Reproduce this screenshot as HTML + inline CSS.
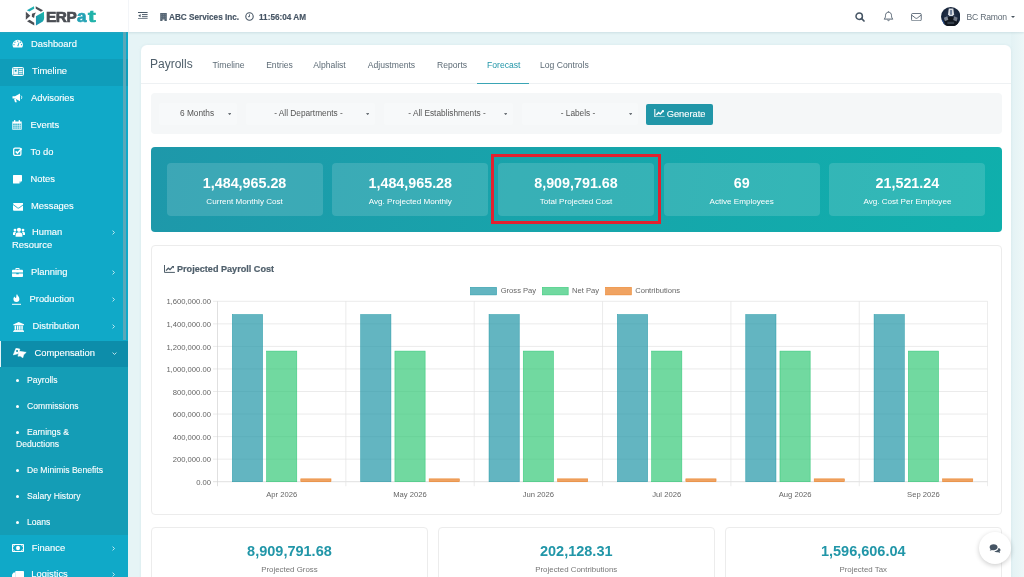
<!DOCTYPE html>
<html><head><meta charset="utf-8">
<style>
*{box-sizing:border-box;margin:0;padding:0}
html,body{width:1024px;height:577px;overflow:hidden}
body{font-family:"Liberation Sans",sans-serif;background:#e6f4f6;position:relative;color:#4e5e6a}
.abs{position:absolute}
#top,#side,#wrap{will-change:transform}
#top{position:absolute;left:0;top:0;width:1024px;height:32px;background:#fff;box-shadow:0 1px 2px rgba(120,160,170,.22);z-index:5}
#side{position:absolute;left:0;top:32px;width:128px;height:545px;background:#10a9c8;z-index:4;overflow:hidden}
.mi{position:absolute;left:0;width:128px;height:27px;color:#fff;-webkit-text-stroke:.12px #fff;font-size:9.400px;line-height:12px;white-space:nowrap}
.mi span.t{position:absolute;top:7.700px;}
.mi>svg{margin-top:1.100px}
.si{position:absolute;left:0;width:128px;color:#fff;-webkit-text-stroke:.1px #fff;font-size:8.600px;line-height:12px;white-space:nowrap}
.chev{position:absolute;left:111px;top:7px;font-size:8px;color:#e8f6fa}
#card{position:absolute;left:141px;top:45px;width:870px;height:560px;background:#fff;border-radius:6px 6px 0 0;box-shadow:0 0 3px rgba(150,190,200,.18)}
.tab{position:absolute;top:58.700px;font-size:8.6px;color:#5d6b76;white-space:nowrap;line-height:12px}
#filter{position:absolute;left:151px;top:93px;width:851px;height:41px;background:#f5f7f8;border-radius:4px}
.sel{position:absolute;top:107px;font-size:8.3px;color:#555;line-height:12px;white-space:nowrap}
.car{position:absolute;top:110px;font-size:6px;color:#777}
#banner{position:absolute;left:151px;top:147px;width:851px;height:85px;border-radius:4px;background:linear-gradient(100deg,#1e98aa 0%,#17a5ab 50%,#0fafac 100%)}
.tile{position:absolute;top:16px;width:156.200px;height:53px;border-radius:4px;background:rgba(255,255,255,.14);color:#fff;text-align:center}
.tile b{display:block;margin-top:12.400px;font-size:14.300px;line-height:16px}
.tile i{display:block;font-style:normal;font-size:8.100px;line-height:10px;margin-top:5.700px}
#chart{position:absolute;left:151px;top:245px;width:851px;height:269.600px;border:1px solid #ececec;border-radius:4px;background:#fff}
.bc{position:absolute;top:527.300px;width:276.900px;height:60px;border:1px solid #ececec;border-radius:4px;background:#fff;text-align:center}
.bc b{display:block;margin-top:15.200px;font-size:14.500px;line-height:16px;color:#2196a8}
.bc i{display:block;font-style:normal;font-size:7.900px;line-height:10px;margin-top:6px;color:#777}
</style></head><body>
<div id="top">
<!-- logo -->
<svg class="abs" style="left:20px;top:2px" width="40" height="28" viewBox="0 0 824 577">
<defs><linearGradient id="lg" x1="1" y1="0" x2="0" y2="1"><stop offset="0" stop-color="#1bb9a9"/><stop offset="1" stop-color="#1c8cb0"/></linearGradient>
<linearGradient id="lg2" x1="0" y1="1" x2="1" y2="0"><stop offset="0" stop-color="#23a3b8"/><stop offset="1" stop-color="#1fb6ae"/></linearGradient></defs>
<polygon points="140,172 288,88 292,138 192,198" fill="url(#lg2)"/>
<polygon points="322,88 474,170 432,202 326,138" fill="#4b4e54"/>
<polygon points="120,200 212,282 120,368" fill="#4b4e54"/>
<polygon points="122,277 136,284 122,291" fill="#fff"/>
<path d="M246 242 L328 218 L302 262 L290 330 L244 302z" fill="#4b4e54"/>
<polygon points="144,398 196,368 294,426 294,484" fill="#4b4e54"/>
<path d="M328 296 L494 200 L497 330 Q492 385 470 402 L328 484z" fill="url(#lg)"/>
</svg>
<div class="abs" style="left:46px;top:5.800px;font-size:15.400px;font-weight:bold;line-height:22px;letter-spacing:-.45px;-webkit-text-stroke:.7px currentColor;color:#4b4e54;white-space:nowrap">ERP<span style="font-size:17px;letter-spacing:1.700px;color:#24a2b4;margin-left:.6px">a</span><span style="font-size:17px;color:#1fb2a9;display:inline-block;transform:scaleX(1.35);transform-origin:0 50%">t</span></div>
<div class="abs" style="left:128px;top:0;width:1px;height:32px;background:#f3f5f8"></div>
<!-- hamburger -->
<svg class="abs" style="left:138px;top:12px" width="10" height="7.400" viewBox="0 0 10 7.400"><g fill="#4a5968"><rect x="0" y="0" width="9.600" height="1"/><rect x="4" y="2.100" width="5.600" height="1"/><rect x="4" y="4.200" width="5.600" height="1"/><rect x="0" y="6.300" width="9.600" height="1"/><polygon points="2.600,2 0.200,3.650 2.600,5.300"/></g></svg>
<!-- building -->
<svg class="abs" style="left:160px;top:12.800px" width="7" height="8.200" viewBox="0 0 7 8.200"><path d="M0.200 0h6.600v8.200h-2.300v-1.700h-2v1.700h-2.300z" fill="#566674"/><g fill="#fff" opacity=".18"><rect x="1.300" y="1.100" width="1" height="1"/><rect x="3" y="1.100" width="1" height="1"/><rect x="4.700" y="1.100" width="1" height="1"/><rect x="1.300" y="2.900" width="1" height="1"/><rect x="3" y="2.900" width="1" height="1"/><rect x="4.700" y="2.900" width="1" height="1"/><rect x="1.300" y="4.700" width="1" height="1"/><rect x="3" y="4.700" width="1" height="1"/><rect x="4.700" y="4.700" width="1" height="1"/></g></svg>
<div class="abs" style="left:169px;top:11.800px;font-size:8.200px;font-weight:bold;line-height:12px;color:#465564;white-space:nowrap;-webkit-text-stroke:.15px #465564">ABC Services Inc.</div>
<svg class="abs" style="left:244.500px;top:12.300px" width="9" height="9" viewBox="0 0 9 9"><circle cx="4.500" cy="4.500" r="3.700" fill="none" stroke="#465564" stroke-width="1.100"/><path d="M4.500 2.400v2.300h-1.500" fill="none" stroke="#465564" stroke-width=".9"/></svg>
<div class="abs" style="left:259px;top:11.800px;font-size:8.200px;font-weight:bold;line-height:12px;color:#465564;white-space:nowrap;-webkit-text-stroke:.15px #465564">11:56:04 AM</div>
<!-- search -->
<svg class="abs" style="left:854.800px;top:11.900px" width="10" height="10" viewBox="0 0 10 10"><circle cx="4.200" cy="4.200" r="3.200" fill="none" stroke="#465564" stroke-width="1.500"/><path d="M6.700 6.700l2.300 2.300" stroke="#465564" stroke-width="1.700" stroke-linecap="round"/></svg>
<!-- bell -->
<svg class="abs" style="left:882.5px;top:11px" width="11" height="11" viewBox="0 0 11 11"><path d="M5.5 1.2c-2 0-3 1.5-3 3.4 0 1.7-.5 2.7-1.4 3.5h8.8c-.9-.8-1.4-1.8-1.4-3.5 0-1.9-1-3.4-3-3.4z" fill="none" stroke="#465564" stroke-width=".9"/><path d="M4.6 8.8a.9.9 0 0 0 1.8 0" fill="none" stroke="#465564" stroke-width=".8"/><rect x="5.1" y=".3" width=".8" height="1" fill="#465564"/></svg>
<!-- envelope -->
<svg class="abs" style="left:911.200px;top:12.800px" width="10.800" height="8.300" viewBox="0 0 11.5 9"><rect x=".5" y=".5" width="10.5" height="8" rx="1.2" fill="none" stroke="#465564" stroke-width=".9"/><path d="M.8 2.4l4 3.1c.6.45 1.3.45 1.9 0l4-3.1" fill="none" stroke="#465564" stroke-width=".9"/></svg>
<!-- avatar -->
<svg class="abs" style="left:940.500px;top:6.500px" width="19.500" height="19.500" viewBox="0 0 20 20"><defs><clipPath id="av"><circle cx="10" cy="10" r="10"/></clipPath><radialGradient id="avg" cx=".5" cy=".45" r=".75"><stop offset="0" stop-color="#2c3a52"/><stop offset=".6" stop-color="#16243a"/><stop offset="1" stop-color="#1d3a5c"/></radialGradient></defs><g clip-path="url(#av)"><rect width="20" height="20" fill="url(#avg)"/><path d="M8 1.500h4.600l.8 6-1.400 1.800h-3.400l-1.400-1.800z" fill="#d9dde3"/><path d="M9.300 3h2v5h-2z" fill="#6e7f9a"/><path d="M2 20c0-6 2.500-10 8.200-10s8 4 8 10z" fill="#10161f"/><path d="M3 11l3.500-1.500 1 3.500-3.500 1.500z" fill="#8e97a5" opacity=".85"/><path d="M13.500 9.500l3.500 1.500-1 3.800-3.500-1.500z" fill="#818a99" opacity=".85"/><path d="M1 13c2 1 3 3 3 6h-3z" fill="#2a5aa8" opacity=".7"/><path d="M6.500 15h7v2.500h-7z" fill="#39424f" opacity=".9"/></g></svg>
<div class="abs" style="left:966.500px;top:11.300px;font-size:8.600px;letter-spacing:-.22px;line-height:12px;color:#606b75;white-space:nowrap">BC Ramon</div>
<div class="abs" style="left:1010.5px;top:15.5px;width:0;height:0;border-left:2.3px solid transparent;border-right:2.3px solid transparent;border-top:2.6px solid #4b5660"></div>
</div>
<div id="side">
<div class="abs" style="left:0;top:27px;width:128px;height:27px;background:#0f9dba"></div>
<div class="abs" style="left:0;top:308.500px;width:128px;height:26.500px;background:#0d8daa;border-left:1px solid #e6f5f9"></div>
<div class="abs" style="left:0;top:335px;width:128px;height:167.500px;background:#149db6"></div>
<div class="mi" style="top:-1.5px"><svg class="abs" style="left:12px;top:7.800px" width="11.500" height="9.400" viewBox="0 0 11 9"><path d="M5.5 .6a5 5 0 0 0-5 5c0 1 .3 1.9.8 2.6h8.4c.5-.7.8-1.600.8-2.600a5 5 0 0 0-5-5z" fill="#fff"/><g fill="#11a8c6"><circle cx="5.500" cy="2" r=".6"/><circle cx="2.800" cy="3" r=".6"/><circle cx="8.200" cy="3" r=".6"/><circle cx="1.900" cy="5.500" r=".6"/><circle cx="9.100" cy="5.500" r=".6"/><path d="M5 6.800l1.600-3.600.5.200-1.100 3.700z"/></g></svg><span class="t" style="left:31px">Dashboard</span></div>
<div class="mi" style="top:25.5px"><svg class="abs" style="left:12px;top:8.500px" width="12" height="9" viewBox="0 0 12 9"><rect x=".5" y=".5" width="11" height="8" rx="1" fill="rgba(255,255,255,.25)" stroke="#fff" stroke-width="1"/><rect x="1.400" y="1.600" width="4.600" height="5.800" fill="#fff" opacity=".9"/><rect x="6.800" y="2.200" width="3.600" height=".9" fill="#fff"/><rect x="6.800" y="4" width="3.600" height=".9" fill="#fff"/><rect x="6.800" y="5.800" width="3.600" height=".9" fill="#fff"/><circle cx="3.700" cy="3.800" r="1" fill="#0f9dba"/></svg><span class="t" style="left:32px">Timeline</span></div>
<div class="mi" style="top:52.5px"><svg class="abs" style="left:12px;top:7.500px" width="11" height="10" viewBox="0 0 11 10"><path d="M.5 3.200h2.500l5-2.700v7.800l-5-2.700h-2.500z" fill="#fff"/><path d="M2 5.800h1.800l1 3.400h-1.800z" fill="#fff"/><path d="M9 2.600c1 .5 1 3 0 3.500" stroke="#fff" stroke-width=".9" fill="none"/></svg><span class="t" style="left:31px">Advisories</span></div>
<div class="mi" style="top:79.5px"><svg class="abs" style="left:12px;top:7.500px" width="10" height="10" viewBox="0 0 10 10"><path d="M.3 1.500h9.400v8.200h-9.400z" fill="#fff"/><rect x="2" y="0" width="1.300" height="2.400" rx=".5" fill="#fff"/><rect x="6.700" y="0" width="1.300" height="2.400" rx=".5" fill="#fff"/><g fill="#11a8c6"><rect x="1.200" y="3.600" width="1.500" height="1.300"/><rect x="3.300" y="3.600" width="1.500" height="1.300"/><rect x="5.400" y="3.600" width="1.500" height="1.300"/><rect x="7.500" y="3.600" width="1.300" height="1.300"/><rect x="1.200" y="5.500" width="1.500" height="1.300"/><rect x="3.300" y="5.500" width="1.500" height="1.300"/><rect x="5.400" y="5.500" width="1.500" height="1.300"/><rect x="7.500" y="5.500" width="1.300" height="1.300"/><rect x="1.200" y="7.400" width="1.500" height="1.300"/><rect x="3.300" y="7.400" width="1.500" height="1.300"/><rect x="5.400" y="7.400" width="1.500" height="1.300"/><rect x="7.500" y="7.400" width="1.300" height="1.300"/></g></svg><span class="t" style="left:30.5px">Events</span></div>
<div class="mi" style="top:106.5px"><svg class="abs" style="left:12.500px;top:7.100px" width="10" height="9" viewBox="0 0 10 9"><rect x=".7" y="1.200" width="7.200" height="7.200" rx="1.300" fill="none" stroke="#fff" stroke-width="1.300"/><path d="M2.700 4.400l1.700 1.700 4.300-4.600" fill="none" stroke="#fff" stroke-width="1.500"/></svg><span class="t" style="left:30.5px">To do</span></div>
<div class="mi" style="top:133.5px"><svg class="abs" style="left:12.500px;top:8.500px" width="9" height="9" viewBox="0 0 9 9"><path d="M.6 0h7.800a.6.6 0 0 1 .6.600v5.400l-2.600 2.600h-5.800a.6.6 0 0 1-.6-.6v-7.400a.6.6 0 0 1 .6-.6z" fill="#fff"/><path d="M6.400 8.600v-2.200h2.400z" fill="#11a8c6" opacity=".55"/></svg><span class="t" style="left:30.5px">Notes</span></div>
<div class="mi" style="top:160.5px"><svg class="abs" style="left:12.800px;top:9.700px" width="10.700" height="7.800" viewBox="0 0 11 8"><rect x="0" y="0" width="11" height="8" rx="1" fill="#fff"/><path d="M0 1.500l4.700 3.500c.5.350 1.100.350 1.600 0l4.700-3.500" fill="none" stroke="#11a8c6" stroke-width=".9"/></svg><span class="t" style="left:31px">Messages</span></div>
<div class="mi" style="top:186.5px"><svg class="abs" style="left:12.500px;top:7.300px" width="12" height="10.600" viewBox="0 0 12 10"><g fill="#fff"><circle cx="6" cy="2.500" r="2.100"/><circle cx="2" cy="2.800" r="1.400"/><circle cx="10" cy="2.800" r="1.400"/><path d="M2.600 9.500v-2.200c0-1.500 1.200-2.400 3.400-2.400s3.400.9 3.400 2.400v2.200z"/><path d="M0 7.800v-1.800c0-1 .7-1.500 2-1.500.5 0 .9.100 1.200.2-.8.600-1.200 1.400-1.200 2.400v.7z"/><path d="M12 7.800v-1.800c0-1-.7-1.500-2-1.500-.5 0-.9.100-1.200.2.800.6 1.200 1.400 1.200 2.400v.7z"/></g></svg><span class="t" style="left:32px">Human</span><span class="t" style="left:12px;top:20.300px">Resource</span><svg class="abs" style="left:112.300px;top:10.300px" width="3.300" height="5" viewBox="0 0 4 6"><path d="M.7.700l2.300 2.300-2.300 2.300" fill="none" stroke="#e6f5f9" stroke-width="1"/></svg></div>
<div class="mi" style="top:226.5px"><svg class="abs" style="left:12px;top:8px" width="11" height="9" viewBox="0 0 11 9"><g fill="#fff"><path d="M3.400 1.800v-1c0-.4.300-.8.800-.8h2.600c.500 0 .8.400.8.800v1h-1v-.8h-2.200v.8z"/><path d="M.8 1.800h9.400c.4 0 .8.400.8.800v2h-11v-2c0-.4.400-.8.800-.8z"/><path d="M0 5.400h4.300v.9h2.400v-.9h4.300v2.800c0 .4-.4.800-.8.800h-9.400c-.4 0-.8-.4-.8-.8z"/></g></svg><span class="t" style="left:31px">Planning</span><svg class="abs" style="left:112.300px;top:10.300px" width="3.300" height="5" viewBox="0 0 4 6"><path d="M.7.700l2.300 2.300-2.300 2.300" fill="none" stroke="#e6f5f9" stroke-width="1"/></svg></div>
<div class="mi" style="top:253.5px"><svg class="abs" style="left:12px;top:7px" width="9" height="11" viewBox="0 0 9 11"><g fill="#fff"><path d="M5 0c.400 1.700 2.400 2.700 2.400 5a3 3 0 0 1-6 0c0-1.100.600-1.900 1.200-2.400.1.800.5 1.300 1 1.300.5 0 .8-.5.700-1.300-.1-.9.100-1.800.7-2.600z"/><rect x="0" y="9.800" width="9" height="1"/></g></svg><span class="t" style="left:29.5px">Production</span><svg class="abs" style="left:112.300px;top:10.300px" width="3.300" height="5" viewBox="0 0 4 6"><path d="M.7.700l2.300 2.300-2.300 2.300" fill="none" stroke="#e6f5f9" stroke-width="1"/></svg></div>
<div class="mi" style="top:280.5px"><svg class="abs" style="left:12.600px;top:8.200px" width="11.400" height="10" viewBox="0 0 11 10"><g fill="#fff"><path d="M5.500 0l5.500 2.400v.8h-11v-.8z"/><rect x="1.400" y="3.600" width="1.500" height="4.200"/><rect x="3.700" y="3.600" width="1.500" height="4.200"/><rect x="5.900" y="3.600" width="1.500" height="4.200"/><rect x="8.100" y="3.600" width="1.500" height="4.200"/><rect x=".6" y="8" width="9.800" height=".9"/><rect x="0" y="9.100" width="11" height=".9"/></g></svg><span class="t" style="left:32.5px">Distribution</span><svg class="abs" style="left:112.300px;top:10.300px" width="3.300" height="5" viewBox="0 0 4 6"><path d="M.7.700l2.300 2.300-2.300 2.300" fill="none" stroke="#e6f5f9" stroke-width="1"/></svg></div>
<div class="mi" style="top:307.5px"><svg class="abs" style="left:13px;top:7.200px" width="13.500" height="10" viewBox="0 0 12 9"><g fill="#fff" stroke="#fff" stroke-width=".5" stroke-linejoin="round"><path d="M2.600 .2l3.500.8-1.200 4-4.700 1.200z"/><path d="M5.600 3l6.200.900-2.400 2.300-.6 2.600-2.400-1.600-2 .2z"/></g><circle cx="3.600" cy="2.800" r=".9" fill="#0d8daa"/></svg><span class="t" style="left:34.5px">Compensation</span><svg class="abs" style="left:111.500px;top:11.300px" width="5" height="3.300" viewBox="0 0 6 4"><path d="M.7.700l2.300 2.300 2.300-2.300" fill="none" stroke="#e6f5f9" stroke-width="1"/></svg></div>
<div class="mi" style="top:502.300px"><svg class="abs" style="left:12px;top:9px" width="12" height="8" viewBox="0 0 12 8"><rect x=".5" y=".5" width="11" height="7" rx=".8" fill="none" stroke="#fff" stroke-width="1.100"/><ellipse cx="6" cy="4" rx="2" ry="2.300" fill="#fff"/><path d="M1 2.400a1.600 1.600 0 0 0 1.500-1.400M11 2.400a1.600 1.600 0 0 1-1.500-1.400M1 5.600a1.600 1.600 0 0 1 1.500 1.400M11 5.600a1.600 1.600 0 0 0-1.500 1.400" stroke="#fff" stroke-width=".7" fill="none"/></svg><span class="t" style="left:31.800px">Finance</span><svg class="abs" style="left:112.300px;top:10.300px" width="3.300" height="5" viewBox="0 0 4 6"><path d="M.7.700l2.300 2.300-2.300 2.300" fill="none" stroke="#e6f5f9" stroke-width="1"/></svg></div>
<div class="mi" style="top:528.700px"><svg class="abs" style="left:12px;top:8px" width="12" height="10" viewBox="0 0 12 10"><g fill="#fff"><path d="M4 1h7.200c.4 0 .8.300.8.800v6.200h-8.800v-6.200c0-.5.400-.8.800-.8z"/><path d="M0 4.500l1.600-2h1.600v5.500h-3.200z"/></g></svg><span class="t" style="left:31.300px">Logistics</span><svg class="abs" style="left:112.300px;top:10.300px" width="3.300" height="5" viewBox="0 0 4 6"><path d="M.7.700l2.300 2.300-2.300 2.300" fill="none" stroke="#e6f5f9" stroke-width="1"/></svg></div>
<div class="si" style="top:342px"><span class="abs" style="left:15.500px;top:4.700px;width:3px;height:3px;border-radius:2px;background:#fff"></span><span class="abs" style="left:27px;top:0">Payrolls</span></div>
<div class="si" style="top:368px"><span class="abs" style="left:15.500px;top:4.700px;width:3px;height:3px;border-radius:2px;background:#fff"></span><span class="abs" style="left:27px;top:0">Commissions</span></div>
<div class="si" style="top:394px"><span class="abs" style="left:15.500px;top:4.700px;width:3px;height:3px;border-radius:2px;background:#fff"></span><span class="abs" style="left:27px;top:0">Earnings &amp;</span><span class="abs" style="left:16px;top:12px">Deductions</span></div>
<div class="si" style="top:432px"><span class="abs" style="left:15.500px;top:4.700px;width:3px;height:3px;border-radius:2px;background:#fff"></span><span class="abs" style="left:27px;top:0">De Minimis Benefits</span></div>
<div class="si" style="top:458px"><span class="abs" style="left:15.500px;top:4.700px;width:3px;height:3px;border-radius:2px;background:#fff"></span><span class="abs" style="left:27px;top:0">Salary History</span></div>
<div class="si" style="top:484px"><span class="abs" style="left:15.500px;top:4.700px;width:3px;height:3px;border-radius:2px;background:#fff"></span><span class="abs" style="left:27px;top:0">Loans</span></div>
<div class="abs" style="left:123px;top:0;width:3px;height:308px;background:#5ba8b9"></div>
</div>
<div id="wrap" style="position:absolute;left:0;top:0;width:1024px;height:577px;overflow:hidden">
<div class="abs" style="left:1011px;top:32px;width:13px;height:545px;background:linear-gradient(90deg,#e3f2f4,#edf7f8)"></div>
<div id="card"></div>
<div class="abs" style="left:150px;top:54.500px;font-size:12px;line-height:18px;color:#4e5e6a">Payrolls</div>
<div class="tab" style="left:212px;width:33px;text-align:center;color:#5d6b76">Timeline</div>
<div class="tab" style="left:266px;width:27px;text-align:center;color:#5d6b76">Entries</div>
<div class="tab" style="left:313px;width:33px;text-align:center;color:#5d6b76">Alphalist</div>
<div class="tab" style="left:367px;width:49px;text-align:center;color:#5d6b76">Adjustments</div>
<div class="tab" style="left:437px;width:30px;text-align:center;color:#5d6b76">Reports</div>
<div class="tab" style="left:487px;width:33px;text-align:center;color:#2196a8">Forecast</div>
<div class="tab" style="left:540px;width:48px;text-align:center;color:#5d6b76">Log Controls</div>
<div class="abs" style="left:141px;top:83px;width:870px;height:1px;background:#eef1f3"></div>
<div class="abs" style="left:477px;top:82.500px;width:52px;height:1.500px;background:#3aa5b5"></div>
<div id="filter"></div>
<div class="abs" style="left:159px;top:103px;width:78px;height:21.500px;background:#f7f9fa;border-radius:2px"></div>
<div class="abs" style="left:246px;top:103px;width:129px;height:21.500px;background:#f7f9fa;border-radius:2px"></div>
<div class="abs" style="left:384px;top:103px;width:129px;height:21.500px;background:#f7f9fa;border-radius:2px"></div>
<div class="abs" style="left:522px;top:103px;width:116px;height:21.500px;background:#f7f9fa;border-radius:2px"></div>
<div class="sel" style="left:180px;width:34px;text-align:center">6 Months</div>
<svg class="abs" style="left:227.9px;top:112.900px" width="3.300" height="2.600" viewBox="0 0 4 3"><polygon points="0,0 4,0 2,2.800" fill="#6f757b"/></svg>
<div class="sel" style="left:274px;width:69px;text-align:center">- All Departments -</div>
<svg class="abs" style="left:365.9px;top:112.900px" width="3.300" height="2.600" viewBox="0 0 4 3"><polygon points="0,0 4,0 2,2.800" fill="#6f757b"/></svg>
<div class="sel" style="left:408px;width:78px;text-align:center">- All Establishments -</div>
<svg class="abs" style="left:503.9px;top:112.900px" width="3.300" height="2.600" viewBox="0 0 4 3"><polygon points="0,0 4,0 2,2.800" fill="#6f757b"/></svg>
<div class="sel" style="left:560px;width:36px;text-align:center">- Labels -</div>
<svg class="abs" style="left:628.9px;top:112.900px" width="3.300" height="2.600" viewBox="0 0 4 3"><polygon points="0,0 4,0 2,2.800" fill="#6f757b"/></svg>
<div class="abs" style="left:646px;top:103.500px;width:67px;height:21px;background:#2196a8;border-radius:2px"></div>
<svg class="abs" style="left:653.800px;top:108.600px" width="11" height="8.600" viewBox="0 0 11 9"><path d="M.6 0v8.400h10.400" fill="none" stroke="#fff" stroke-width="1.100"/><path d="M2.200 6.200l2.300-2.600 1.800 1.600 3-3.400" fill="none" stroke="#fff" stroke-width="1.500"/><path d="M7.800 1.200h2.400v2.400z" fill="#fff"/></svg>
<div class="abs" style="left:666.700px;top:107.800px;font-size:9.300px;-webkit-text-stroke:.12px #fff;line-height:12px;color:#fff;white-space:nowrap">Generate</div>

<div id="banner">
<div class="tile" style="left:15.5px"><b>1,484,965.28</b><i>Current Monthly Cost</i></div>
<div class="tile" style="left:181.2px"><b>1,484,965.28</b><i>Avg. Projected Monthly</i></div>
<div class="tile" style="left:346.9px"><b>8,909,791.68</b><i>Total Projected Cost</i></div>
<div class="tile" style="left:512.6px"><b>69</b><i>Active Employees</i></div>
<div class="tile" style="left:678.3px"><b>21,521.24</b><i>Avg. Cost Per Employee</i></div>
</div>
<div class="abs" style="left:491px;top:154px;width:170px;height:70px;border:3px solid #e2212f"></div>
<div id="chart"></div>
<svg class="abs" style="left:0;top:0;z-index:2" width="1024" height="577" viewBox="0 0 1024 577" font-family="Liberation Sans, sans-serif">
<line x1="213.00" y1="301.30" x2="987.60" y2="301.30" stroke="#e3e3e3" stroke-width="0.700"/>
<line x1="213.00" y1="323.85" x2="987.60" y2="323.85" stroke="#e3e3e3" stroke-width="0.700"/>
<line x1="213.00" y1="346.40" x2="987.60" y2="346.40" stroke="#e3e3e3" stroke-width="0.700"/>
<line x1="213.00" y1="368.95" x2="987.60" y2="368.95" stroke="#e3e3e3" stroke-width="0.700"/>
<line x1="213.00" y1="391.50" x2="987.60" y2="391.50" stroke="#e3e3e3" stroke-width="0.700"/>
<line x1="213.00" y1="414.05" x2="987.60" y2="414.05" stroke="#e3e3e3" stroke-width="0.700"/>
<line x1="213.00" y1="436.60" x2="987.60" y2="436.60" stroke="#e3e3e3" stroke-width="0.700"/>
<line x1="213.00" y1="459.15" x2="987.60" y2="459.15" stroke="#e3e3e3" stroke-width="0.700"/>
<line x1="213.00" y1="481.70" x2="987.60" y2="481.70" stroke="#d2d2d2" stroke-width="0.700"/>
<line x1="217.50" y1="301.30" x2="217.50" y2="486.20" stroke="#d2d2d2" stroke-width="0.700"/>
<line x1="345.85" y1="301.30" x2="345.85" y2="486.20" stroke="#e3e3e3" stroke-width="0.700"/>
<line x1="474.20" y1="301.30" x2="474.20" y2="486.20" stroke="#e3e3e3" stroke-width="0.700"/>
<line x1="602.55" y1="301.30" x2="602.55" y2="486.20" stroke="#e3e3e3" stroke-width="0.700"/>
<line x1="730.90" y1="301.30" x2="730.90" y2="486.20" stroke="#e3e3e3" stroke-width="0.700"/>
<line x1="859.25" y1="301.30" x2="859.25" y2="486.20" stroke="#e3e3e3" stroke-width="0.700"/>
<line x1="987.60" y1="301.30" x2="987.60" y2="486.20" stroke="#e3e3e3" stroke-width="0.700"/>
<text x="211.00" y="304.40" font-size="7.650" fill="#666" text-anchor="end">1,600,000.00</text>
<text x="211.00" y="326.95" font-size="7.650" fill="#666" text-anchor="end">1,400,000.00</text>
<text x="211.00" y="349.50" font-size="7.650" fill="#666" text-anchor="end">1,200,000.00</text>
<text x="211.00" y="372.05" font-size="7.650" fill="#666" text-anchor="end">1,000,000.00</text>
<text x="211.00" y="394.60" font-size="7.650" fill="#666" text-anchor="end">800,000.00</text>
<text x="211.00" y="417.15" font-size="7.650" fill="#666" text-anchor="end">600,000.00</text>
<text x="211.00" y="439.70" font-size="7.650" fill="#666" text-anchor="end">400,000.00</text>
<text x="211.00" y="462.25" font-size="7.650" fill="#666" text-anchor="end">200,000.00</text>
<text x="211.00" y="484.80" font-size="7.650" fill="#666" text-anchor="end">0.00</text>
<text x="281.68" y="496.70" font-size="7.650" fill="#666" text-anchor="middle">Apr 2026</text>
<rect x="232.35" y="314.57" width="30.20" height="167.13" fill="rgba(33,150,166,.7)" stroke="rgba(33,150,166,.85)" stroke-width="0.600"/>
<rect x="266.57" y="351.10" width="30.20" height="130.60" fill="rgba(45,199,115,.68)" stroke="rgba(45,199,115,.85)" stroke-width="0.600"/>
<rect x="300.80" y="478.84" width="30.20" height="2.86" fill="rgba(234,124,31,.7)" stroke="rgba(234,124,31,.85)" stroke-width="0.600"/>
<text x="410.03" y="496.70" font-size="7.650" fill="#666" text-anchor="middle">May 2026</text>
<rect x="360.70" y="314.57" width="30.20" height="167.13" fill="rgba(33,150,166,.7)" stroke="rgba(33,150,166,.85)" stroke-width="0.600"/>
<rect x="394.92" y="351.10" width="30.20" height="130.60" fill="rgba(45,199,115,.68)" stroke="rgba(45,199,115,.85)" stroke-width="0.600"/>
<rect x="429.15" y="478.84" width="30.20" height="2.86" fill="rgba(234,124,31,.7)" stroke="rgba(234,124,31,.85)" stroke-width="0.600"/>
<text x="538.38" y="496.70" font-size="7.650" fill="#666" text-anchor="middle">Jun 2026</text>
<rect x="489.05" y="314.57" width="30.20" height="167.13" fill="rgba(33,150,166,.7)" stroke="rgba(33,150,166,.85)" stroke-width="0.600"/>
<rect x="523.27" y="351.10" width="30.20" height="130.60" fill="rgba(45,199,115,.68)" stroke="rgba(45,199,115,.85)" stroke-width="0.600"/>
<rect x="557.50" y="478.84" width="30.20" height="2.86" fill="rgba(234,124,31,.7)" stroke="rgba(234,124,31,.85)" stroke-width="0.600"/>
<text x="666.72" y="496.70" font-size="7.650" fill="#666" text-anchor="middle">Jul 2026</text>
<rect x="617.40" y="314.57" width="30.20" height="167.13" fill="rgba(33,150,166,.7)" stroke="rgba(33,150,166,.85)" stroke-width="0.600"/>
<rect x="651.62" y="351.10" width="30.20" height="130.60" fill="rgba(45,199,115,.68)" stroke="rgba(45,199,115,.85)" stroke-width="0.600"/>
<rect x="685.85" y="478.84" width="30.20" height="2.86" fill="rgba(234,124,31,.7)" stroke="rgba(234,124,31,.85)" stroke-width="0.600"/>
<text x="795.07" y="496.70" font-size="7.650" fill="#666" text-anchor="middle">Aug 2026</text>
<rect x="745.75" y="314.57" width="30.20" height="167.13" fill="rgba(33,150,166,.7)" stroke="rgba(33,150,166,.85)" stroke-width="0.600"/>
<rect x="779.97" y="351.10" width="30.20" height="130.60" fill="rgba(45,199,115,.68)" stroke="rgba(45,199,115,.85)" stroke-width="0.600"/>
<rect x="814.20" y="478.84" width="30.20" height="2.86" fill="rgba(234,124,31,.7)" stroke="rgba(234,124,31,.85)" stroke-width="0.600"/>
<text x="923.42" y="496.70" font-size="7.650" fill="#666" text-anchor="middle">Sep 2026</text>
<rect x="874.10" y="314.57" width="30.20" height="167.13" fill="rgba(33,150,166,.7)" stroke="rgba(33,150,166,.85)" stroke-width="0.600"/>
<rect x="908.32" y="351.10" width="30.20" height="130.60" fill="rgba(45,199,115,.68)" stroke="rgba(45,199,115,.85)" stroke-width="0.600"/>
<rect x="942.55" y="478.84" width="30.20" height="2.86" fill="rgba(234,124,31,.7)" stroke="rgba(234,124,31,.85)" stroke-width="0.600"/>
<rect x="470.40" y="287.3" width="26.20" height="7.600" fill="rgba(33,150,166,.7)" stroke="rgba(33,150,166,.85)" stroke-width="0.600"/>
<text x="500.7" y="293" font-size="7.600" fill="#666">Gross Pay</text>
<rect x="542.30" y="287.3" width="25.90" height="7.600" fill="rgba(45,199,115,.68)" stroke="rgba(45,199,115,.85)" stroke-width="0.600"/>
<text x="572" y="293" font-size="7.600" fill="#666">Net Pay</text>
<rect x="605.50" y="287.3" width="25.90" height="7.600" fill="rgba(234,124,31,.7)" stroke="rgba(234,124,31,.85)" stroke-width="0.600"/>
<text x="635.2" y="293" font-size="7.600" fill="#666">Contributions</text>
</svg>
<svg class="abs" style="left:163.500px;top:265px;z-index:2" width="11" height="8" viewBox="0 0 11 8"><path d="M.5 0v7.400h10.400" fill="none" stroke="#4e5e6a" stroke-width="1"/><path d="M2 5.600l2.300-2.400 1.700 1.400 3-3.200" fill="none" stroke="#4e5e6a" stroke-width="1.300"/><path d="M7.600 1h2.400v2.400z" fill="#4e5e6a"/></svg>
<div class="abs" style="left:177px;top:263px;font-size:9.100px;font-weight:bold;-webkit-text-stroke:.2px #4e5e6a;line-height:12px;color:#4e5e6a;white-space:nowrap;z-index:2">Projected Payroll Cost</div>
<div class="bc" style="left:151px"><b>8,909,791.68</b><i>Projected Gross</i></div>
<div class="bc" style="left:437.800px"><b>202,128.31</b><i>Projected Contributions</i></div>
<div class="bc" style="left:724.800px"><b>1,596,606.04</b><i>Projected Tax</i></div>
<div class="abs" style="left:978.800px;top:532.300px;width:32px;height:32px;border-radius:50%;background:#fff;box-shadow:0 1.500px 5px rgba(0,0,0,.2);z-index:6"></div>
<svg class="abs" style="left:989px;top:543.600px;z-index:7" width="12" height="9.300" viewBox="0 0 12 10"><path d="M4.500 .3c-2.400 0-4.300 1.400-4.300 3.200 0 .8.400 1.500 1 2.100-.1.600-.5 1.100-.9 1.500 1 0 1.800-.3 2.400-.7.600.2 1.200.3 1.800.3 2.400 0 4.300-1.400 4.300-3.200s-1.900-3.200-4.300-3.200z" fill="#465564"/><path d="M9.700 4.200c0 1.900-1.900 3.500-4.500 3.700.7.700 1.800 1.100 3 1.100.5 0 1-.1 1.400-.2.500.4 1.200.7 2 .700-.3-.3-.6-.8-.7-1.300.6-.5 1-1.100 1-1.800 0-1-.9-1.900-2.200-2.200z" fill="#465564"/></svg>

</div>
</body></html>
